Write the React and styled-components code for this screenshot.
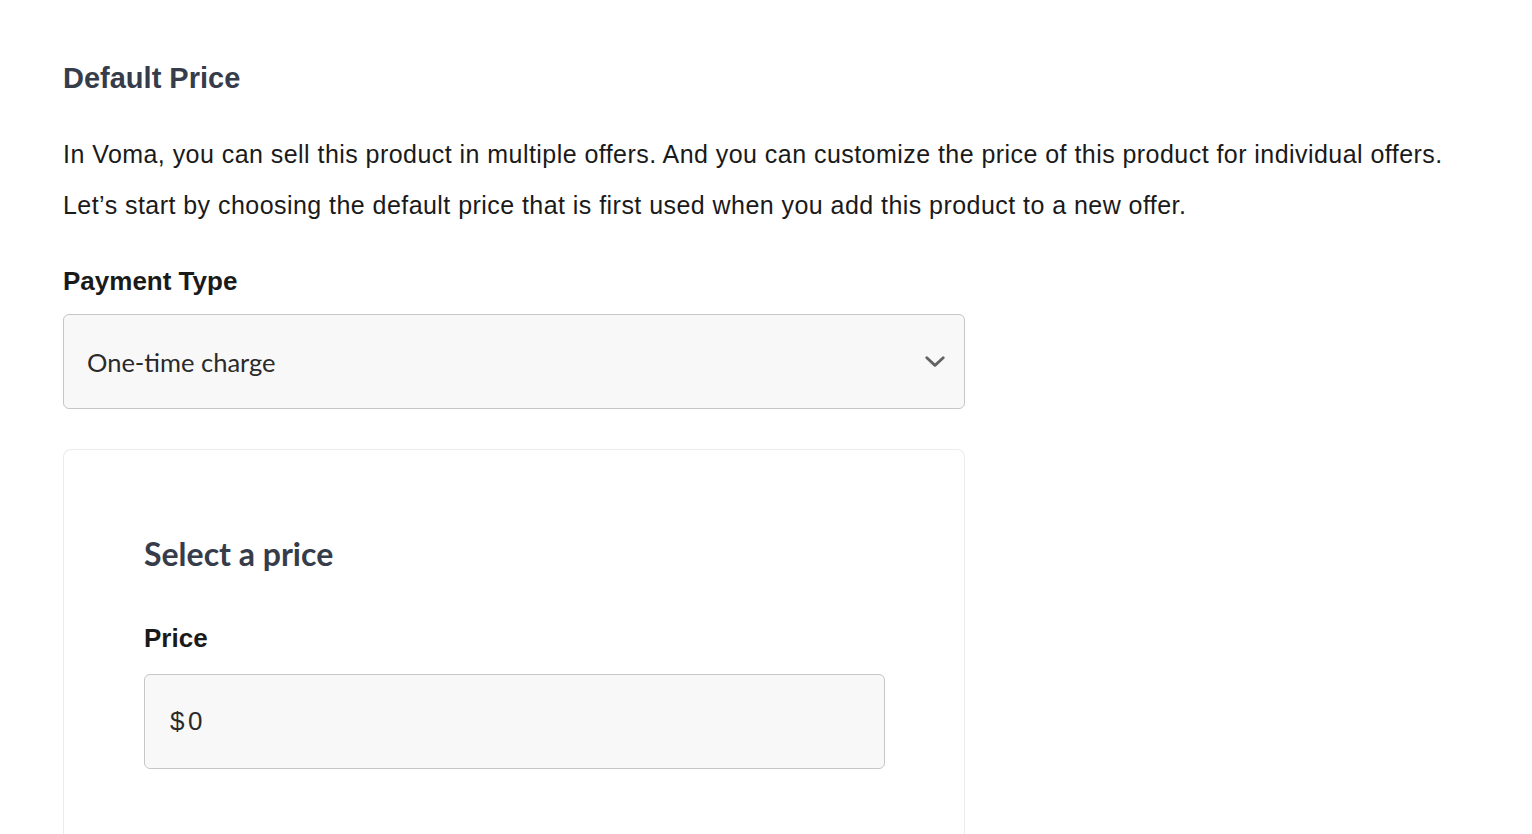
import React from 'react';
import styled, { createGlobalStyle } from 'styled-components';

const GlobalStyle = createGlobalStyle`
  html, body {
    margin: 0;
    padding: 0;
    background: #ffffff;
  }
  body {
    font-family: "Liberation Sans", Arial, Helvetica, sans-serif;
    -webkit-font-smoothing: antialiased;
  }
`;

const Page = styled.div`
  padding: 58px 63px 0 63px;
  height: 834px;
  box-sizing: border-box;
  overflow: hidden;
`;

const Heading = styled.h2`
  margin: 0;
  font-size: 29px;
  line-height: 40px;
  font-weight: 700;
  color: #363c4a;
`;

const Intro = styled.div`
  margin-top: 41px;
  display: flex;
  flex-direction: column;
  gap: 21px;
`;

const Paragraph = styled.p`
  margin: 0;
  font-size: 25px;
  line-height: 30px;
  letter-spacing: 0.45px;
  color: #1a1a1a;
`;

const Field = styled.div`
  width: 902px;
  margin-top: ${({ $top }) => $top || 0}px;
  display: flex;
  flex-direction: column;
  gap: ${({ $gap }) => $gap || 18}px;
`;

const Label = styled.label`
  font-size: 26px;
  line-height: 30px;
  font-weight: 700;
  color: #1a1a1a;
`;

const Box = styled.div`
  height: 95px;
  box-sizing: border-box;
  border: 1px solid #c6c6c6;
  border-radius: 6px;
  background: #f8f8f8;
  display: flex;
  align-items: center;
  justify-content: space-between;
  padding: 0 19px 0 ${({ $left }) => $left || 23}px;
`;

const BoxText = styled.span`
  font-family: Lato, "Open Sans", sans-serif;
  font-size: 25.5px;
  color: #2a2a2a;
`;

const PriceText = styled.span`
  font-family: "Liberation Sans", Arial, sans-serif;
  font-size: 26px;
  color: #2a2a2a;
  letter-spacing: 3.5px;
`;

const Chevron = () => (
  <svg width="20" height="12" viewBox="0 0 20 12" fill="none">
    <path d="M1.8 1.8 L10 9.4 L18.2 1.8" stroke="#636363" strokeWidth="2.8" strokeLinecap="round" strokeLinejoin="round" />
  </svg>
);

const Card = styled.section`
  margin-top: 40px;
  width: 902px;
  box-sizing: border-box;
  border: 1px solid #ececec;
  border-bottom: none;
  border-radius: 8px 8px 0 0;
  padding: 84px 80px 120px 80px;
`;

const CardTitle = styled.h3`
  margin: 0;
  font-family: Lato, "Open Sans", sans-serif;
  font-size: 32px;
  line-height: 40px;
  font-weight: 700;
  color: #363c4a;
`;

const CardField = styled(Field)`
  width: 741px;
`;

export default function App() {
  return (
    <>
      <GlobalStyle />
      <Page>
        <Heading>Default Price</Heading>
        <Intro>
          <Paragraph>
            In Voma, you can sell this product in multiple offers. And you can customize the price of this product for individual offers.
          </Paragraph>
          <Paragraph>
            Let’s start by choosing the default price that is first used when you add this product to a new offer.
          </Paragraph>
        </Intro>
        <Field $top={46}>
          <Label>Payment Type</Label>
          <Box>
            <BoxText>One-time charge</BoxText>
            <Chevron />
          </Box>
        </Field>
        <Card>
          <CardTitle>Select a price</CardTitle>
          <CardField $top={49} $gap={21}>
            <Label>Price</Label>
            <Box $left={25}>
              <PriceText>$0</PriceText>
            </Box>
          </CardField>
        </Card>
      </Page>
    </>
  );
}
